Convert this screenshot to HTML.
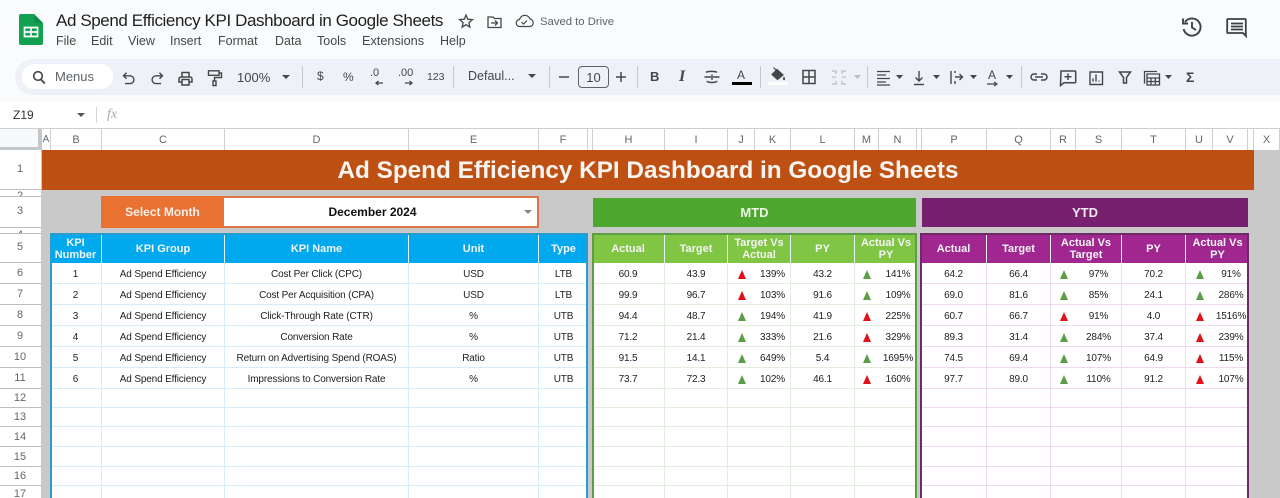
<!DOCTYPE html>
<html lang="en"><head><meta charset="utf-8"><title>Ad Spend Efficiency KPI Dashboard in Google Sheets</title>
<style>
html,body{margin:0;padding:0;width:1280px;height:498px;overflow:hidden;background:#f9fbfd}
body{position:relative;font-family:"Liberation Sans",Arial,sans-serif;color:#222;filter:blur(.3px)}
.a{position:absolute}
.t{position:absolute;white-space:nowrap;color:#444746}
.sep{position:absolute;width:1px;top:66px;height:22px;background:#c7c9cc}
.ch{position:absolute;top:129px;height:21px;line-height:22px;text-align:center;font-size:11px;color:#666;background:#fff;border-right:1px solid #cfcfcf;box-sizing:border-box}
.rh{position:absolute;left:0;width:41px;padding-right:1px;text-align:center;font-size:11px;color:#666;background:#fff;border-bottom:1px solid #bdbdbd;box-sizing:border-box;overflow:hidden}
table{position:absolute;top:233px;border-collapse:separate;border-spacing:0;table-layout:fixed;background:#fff}
td,th{padding:0;text-align:center;box-sizing:border-box;overflow:visible;white-space:nowrap}
td{font-size:10px;letter-spacing:-.15px;color:#222;font-weight:400;padding-top:2px}
th{font-size:11px;line-height:12px;color:#f4f4f4;font-weight:700;height:30px;padding-top:1px;white-space:normal;border-right:1px solid #e8f4fb}
tr.h21 td{height:21px}tr.h19 td{height:19px}tr.h20 td{height:20px}
.bl td{border-right:1px solid #d5edf7;border-bottom:1px solid #d5edf7}.bl th{background:#00a9ee}
.gr td{border-right:1px solid #e3eddd;border-bottom:1px solid #e3eddd}.gr th{background:#80c644}
.pu td{border-right:1px solid #efd9ef;border-bottom:1px solid #efd9ef}.pu th{background:#a0278f}
.gr td:nth-child(3),.gr td:nth-child(6),.pu td:nth-child(3),.pu td:nth-child(6){border-right:0}
td:last-child,th:last-child{border-right:0!important}
i{display:inline-block;width:0;height:0;border-left:4.5px solid transparent;border-right:4.5px solid transparent;vertical-align:-2px}
i.g{border-bottom:9px solid #5c9e48}i.r{border-bottom:9px solid #e30f19}
</style></head><body>

<!-- toolbar & formula bar -->
<div class="a" style="left:15px;top:59px;width:1265px;height:36px;background:#eef2f8;border-radius:18px 0 0 18px"></div>
<div class="a" style="left:22px;top:64px;width:91px;height:25px;background:#fff;border-radius:13px"></div>
<div class="a" style="left:0;top:102px;width:1280px;height:27px;background:#fff"></div>
<div class="a" style="left:0;top:128px;width:1280px;height:1px;background:#cfcfcf"></div>
<div class="a" style="left:96px;top:107px;width:1px;height:16px;background:#d5d5d5"></div>

<!-- chrome text -->
<div class="t" style="left:56px;top:11px;font-size:17px;line-height:20px;color:#1f1f1f;letter-spacing:-.4px">Ad Spend Efficiency KPI Dashboard in Google Sheets</div>
<div class="t" style="left:540px;top:15px;font-size:11.3px;line-height:14px;color:#5f6368">Saved to Drive</div>
<div class="t" style="left:56px;top:34px;font-size:12.5px;line-height:15px">File</div>
<div class="t" style="left:91px;top:34px;font-size:12.5px;line-height:15px">Edit</div>
<div class="t" style="left:128px;top:34px;font-size:12.5px;line-height:15px">View</div>
<div class="t" style="left:170px;top:34px;font-size:12.5px;line-height:15px">Insert</div>
<div class="t" style="left:218px;top:34px;font-size:12.5px;line-height:15px">Format</div>
<div class="t" style="left:275px;top:34px;font-size:12.5px;line-height:15px">Data</div>
<div class="t" style="left:317px;top:34px;font-size:12.5px;line-height:15px">Tools</div>
<div class="t" style="left:362px;top:34px;font-size:12.7px;line-height:15px">Extensions</div>
<div class="t" style="left:440px;top:34px;font-size:12.5px;line-height:15px">Help</div>
<div class="t" style="left:55px;top:69px;font-size:13px;line-height:15px;color:#5f6368">Menus</div>
<div class="t" style="left:237px;top:70px;font-size:13px;line-height:15px">100%</div>
<div class="t" style="left:317px;top:69px;font-size:12px;line-height:15px">$</div>
<div class="t" style="left:343px;top:70px;font-size:12px;line-height:15px">%</div>
<div class="t" style="left:370px;top:66px;font-size:11px;line-height:14px">.0</div>
<div class="t" style="left:398px;top:66px;font-size:11px;line-height:14px">.00</div>
<div class="t" style="left:427px;top:71px;font-size:10.5px;line-height:13px">123</div>
<div class="t" style="left:468px;top:69px;font-size:12.5px;line-height:15px">Defaul...</div>
<div class="a" style="left:578px;top:66px;width:31px;height:22px;border:1px solid #5f6368;border-radius:4px;box-sizing:border-box;text-align:center;font-size:13px;line-height:21px;color:#444746">10</div>
<div class="t" style="left:650px;top:69px;font-size:13px;line-height:15px;font-weight:700">B</div>
<div class="t" style="left:679px;top:68px;font-size:16px;line-height:17px;font-family:'Liberation Serif',serif;font-style:italic;font-weight:700">I</div>
<div class="t" style="left:737px;top:68px;font-size:12px;line-height:14px">A</div>
<div class="t" style="left:988px;top:68px;font-size:12px;line-height:14px">A</div>
<div class="t" style="left:1186px;top:69px;font-size:14px;line-height:16px;font-weight:700">Σ</div>
<div class="t" style="left:13px;top:108px;font-size:12px;line-height:14px;color:#333">Z19</div>
<div class="t" style="left:107px;top:107px;font-size:14px;line-height:16px;font-family:'Liberation Serif',serif;font-style:italic;color:#aaa">fx</div>

<div class="sep" style="left:302px"></div><div class="sep" style="left:453px"></div><div class="sep" style="left:549px"></div><div class="sep" style="left:637px"></div><div class="sep" style="left:760px"></div><div class="sep" style="left:867px"></div><div class="sep" style="left:1021px"></div>

<!-- chrome icons -->
<svg class="a" style="left:0;top:0" width="1280" height="128" viewBox="0 0 1280 128" fill="none" stroke="#444746" stroke-width="1.5">
<path d="M19 16a2 2 0 0 1 2-2h13l9 9v20a2 2 0 0 1-2 2H21a2 2 0 0 1-2-2z" fill="#12a150" stroke="none"/>
<path d="M34 14l9 9h-9z" fill="#0f8e47" stroke="none"/>
<path d="M24.500 27.500h13v9h-13zM24.500 32h13M31 27.500v9" stroke="#fff" stroke-width="1.700"/>
<path d="M466 15l1.800 4.200 4.600.4-3.500 3 1 4.500-3.900-2.400-3.900 2.400 1-4.500-3.500-3 4.600-.4z" stroke-width="1.300"/>
<path d="M488 17h5l1.500 1.500H501v9h-13zM491 23h6M495 20.500l2.500 2.500-2.500 2.500" stroke-width="1.300"/>
<path d="M520 26.500a3.500 3.500 0 0 1-.5-7 5.500 5.500 0 0 1 10.500-.5 3.800 3.800 0 0 1 0 7.500zM521.500 22l2 2 3.500-3.500" stroke-width="1.200"/>
<circle cx="38" cy="76" r="4.300" stroke-width="1.600"/><path d="M41 79.500l3.800 4" stroke-width="1.800"/>
<path d="M126.500 72.800l-3 3 3 3M123.800 75.800H130a3.900 3.900 0 0 1 0 7.800h-5" stroke-width="1.400"/>
<path d="M159.500 72.800l3 3-3 3M162.200 75.800H156a3.900 3.900 0 0 0 0 7.800h5" stroke-width="1.400"/>
<path d="M181 77h9a2 2 0 0 1 2 2v3h-3v-2.500h-7V82h-3v-3a2 2 0 0 1 2-2zM182 77v-4.500h7V77M182 79.500h7V85h-7z" stroke-width="1.500"/>
<path d="M208.500 70.800h10.500v4.500h-10.500zM219 73h2.500v4.500h-7v3.500M213 81h3v4.500h-3z" stroke-width="1.400"/>
<path d="M282 75h8l-4 4z" fill="#444746" stroke="none"/><path d="M528 74h8l-4 4z" fill="#444746" stroke="none"/>
<path d="M376 83h7M378.500 81l-2.500 2 2.500 2M405 83h7M409.500 81l2.500 2-2.500 2" stroke-width="1.300"/>
<path d="M559 77h10M616 77h10M621 72v10" stroke-width="1.500"/>
<path d="M706 72.500c1-1.500 10-1.500 11 0M704.500 77h15M707 81c1 2 9 2 10 0M712 74.500v1.500M712 78v2" stroke-width="1.400"/>
<path d="M732 83.500h20" stroke="#000" stroke-width="3"/>
<path d="M772 74.500l5-5 6 5.500-5.500 4.500zM773.500 67.500l3.500 3.500" fill="#444746" stroke-width="1.200"/><path d="M784 76.500c1.300 1.500 1.500 3.500 0 3.700-1.500-.2-1.300-2.200 0-3.700z" fill="#444746" stroke="none"/>
<path d="M768 83.500h20" stroke="#fff" stroke-width="3"/>
<path d="M803 70.500h12v13h-12zM803 77h12M809 70.500v13" stroke-width="1.500"/>
<path d="M832 71h4v3M846 71h-4v3M832 84h4v-3M846 84h-4v-3M832 77h4M842 77h4" stroke="#b9bec5" stroke-width="1.300"/>
<path d="M854 75h7l-3.500 4z" fill="#b9bec5" stroke="none"/>
<path d="M877 71.500h13M877 75h9M877 78.500h13M877 82h9M877 85h13" stroke-width="1.300"/>
<path d="M896 75h7l-3.500 4zM933 75h7l-3.500 4zM970 75h7l-3.500 4zM1006 75h7l-3.500 4zM1165 75h7l-3.500 4z" fill="#444746" stroke="none"/>
<path d="M914 84.500h10M919 71v10M915.500 77.500l3.500 3.500 3.500-3.500" stroke-width="1.400"/>
<path d="M951 71v13M955 77h7M959.500 74l3 3-3 3M955 71v2M955 81v3" stroke-width="1.400"/>
<path d="M987 84h10M994 82l3 2-3 2" stroke-width="1.200"/>
<path d="M1037 74h-3a3 3 0 0 0 0 6h3M1041 74h3a3 3 0 0 1 0 6h-3M1035 77h8" stroke-width="1.500"/>
<path d="M1061 71h14a.7.7 0 0 1 .7.7V82a.7.7 0 0 1-.7.7h-11l-3.500 2.800zM1068 73.500v6.500M1064.500 76.800h7" stroke-width="1.500"/>
<path d="M1090 72h12.500v12.500h-12.500zM1093 81.500v-3M1096 81.500v-7M1099 81.500v-1" stroke-width="1.400"/>
<path d="M1119.500 72h11l-4 5.500v5.500h-3v-5.500z" stroke-width="1.500"/>
<path d="M1147 74h12.500v11h-12.500zM1144.500 83.500V71.500h12.500M1147 78h12.500M1147 81.500h12.500M1151 78v7M1155.300 78v7" stroke-width="1.300"/>
<path d="M1185 22A8.600 8.600 0 1 1 1183.600 29M1183 18.500V23.500h5M1192 22v5.500l4 2.500" stroke="#3c4043" stroke-width="1.900"/>
<path d="M1228 19h17a.8.8 0 0 1 .8.8V34l.2 2-3-3h-15a.8.8 0 0 1-.8-.8V19.800a.8.8 0 0 1 .8-.8zM1231 23.500h12M1231 26.500h12M1231 29.500h12" stroke="#3c4043" stroke-width="1.800"/>
<path d="M77 113h8l-4 4z" fill="#555" stroke="none"/>
</svg>

<!-- sheet background -->
<div class="a" style="left:41px;top:150px;width:1239px;height:348px;background:#c9c9c9"></div>
<div class="a" style="left:0;top:129px;width:38px;height:18px;background:#f8f9fa"></div>
<div class="a" style="left:0;top:147px;width:42px;height:3px;background:#c4c7c9"></div>
<div class="a" style="left:38px;top:129px;width:4px;height:21px;background:#c4c7c9"></div>

<!-- column headers -->
<div class="ch" style="left:42px;width:9px;font-size:10px">A</div>
<div class="ch" style="left:51px;width:51px">B</div>
<div class="ch" style="left:102px;width:123px">C</div>
<div class="ch" style="left:225px;width:184px">D</div>
<div class="ch" style="left:409px;width:130px">E</div>
<div class="ch" style="left:539px;width:49px">F</div>
<div class="ch" style="left:588px;width:5px"></div>
<div class="ch" style="left:593px;width:72px">H</div>
<div class="ch" style="left:665px;width:63px">I</div>
<div class="ch" style="left:728px;width:27px">J</div>
<div class="ch" style="left:755px;width:36px">K</div>
<div class="ch" style="left:791px;width:64px">L</div>
<div class="ch" style="left:855px;width:24px">M</div>
<div class="ch" style="left:879px;width:38px">N</div>
<div class="ch" style="left:917px;width:5px"></div>
<div class="ch" style="left:922px;width:65px">P</div>
<div class="ch" style="left:987px;width:64px">Q</div>
<div class="ch" style="left:1051px;width:25px">R</div>
<div class="ch" style="left:1076px;width:46px">S</div>
<div class="ch" style="left:1122px;width:64px">T</div>
<div class="ch" style="left:1186px;width:27px">U</div>
<div class="ch" style="left:1213px;width:35px">V</div>
<div class="ch" style="left:1248px;width:6px"></div>
<div class="ch" style="left:1254px;width:26px">X</div>

<!-- row headers -->
<div class="rh" style="top:150px;height:40px;line-height:39px">1</div>
<div class="rh" style="top:190px;height:7px;line-height:13px">2</div>
<div class="rh" style="top:197px;height:31px;line-height:29px">3</div>
<div class="rh" style="top:228px;height:6px;line-height:14px">4</div>
<div class="rh" style="top:234px;height:29px;line-height:27px">5</div>
<div class="rh" style="top:263px;height:21px;line-height:21px">6</div>
<div class="rh" style="top:284px;height:21px;line-height:21px">7</div>
<div class="rh" style="top:305px;height:21px;line-height:21px">8</div>
<div class="rh" style="top:326px;height:21px;line-height:21px">9</div>
<div class="rh" style="top:347px;height:21px;line-height:21px">10</div>
<div class="rh" style="top:368px;height:21px;line-height:21px">11</div>
<div class="rh" style="top:389px;height:19px;line-height:19px">12</div>
<div class="rh" style="top:408px;height:19px;line-height:19px">13</div>
<div class="rh" style="top:427px;height:20px;line-height:20px">14</div>
<div class="rh" style="top:447px;height:20px;line-height:20px">15</div>
<div class="rh" style="top:467px;height:19px;line-height:19px">16</div>
<div class="rh" style="top:486px;height:19px;line-height:16px">17</div>

<!-- banner -->
<div class="a" style="left:42px;top:150px;width:1212px;height:40px;background:#bf5013;color:#f8f4ef;font-size:24.3px;font-weight:700;line-height:42px;text-align:center;white-space:nowrap">Ad Spend Efficiency KPI Dashboard in Google Sheets</div>

<!-- selectors -->
<div class="a" style="left:101px;top:196px;width:123px;height:32px;background:#e97132;color:#f8f0e8;font-size:12px;font-weight:700;line-height:32px;text-align:center">Select Month</div>
<div class="a" style="left:224px;top:196px;width:315px;height:32px;background:#fff;border:2px solid #d9774a;border-left:0;box-sizing:border-box;color:#111;font-size:12px;font-weight:700;line-height:29px;text-align:center;text-indent:-16px">December 2024</div>
<div class="a" style="left:524px;top:210px;width:0;height:0;border-left:4px solid transparent;border-right:4px solid transparent;border-top:4px solid #888"></div>
<div class="a" style="left:593px;top:198px;width:323px;height:29px;background:#4ea72e;color:#eef6e8;font-size:13px;font-weight:700;line-height:30px;text-align:center">MTD</div>
<div class="a" style="left:922px;top:198px;width:326px;height:29px;background:#76206f;color:#f2e8f1;font-size:13px;font-weight:700;line-height:30px;text-align:center">YTD</div>

<!-- left table -->
<table class="bl" style="left:50px;width:538px">
<colgroup><col style="width:52px"><col style="width:123px"><col style="width:184px"><col style="width:130px"><col style="width:49px"></colgroup>
<tr><th>KPI Number</th><th>KPI Group</th><th>KPI Name</th><th>Unit</th><th>Type</th></tr>
<tr class="h21"><td>1</td><td>Ad Spend Efficiency</td><td>Cost Per Click (CPC)</td><td>USD</td><td>LTB</td></tr>
<tr class="h21"><td>2</td><td>Ad Spend Efficiency</td><td>Cost Per Acquisition (CPA)</td><td>USD</td><td>LTB</td></tr>
<tr class="h21"><td>3</td><td>Ad Spend Efficiency</td><td>Click-Through Rate (CTR)</td><td>%</td><td>UTB</td></tr>
<tr class="h21"><td>4</td><td>Ad Spend Efficiency</td><td>Conversion Rate</td><td>%</td><td>UTB</td></tr>
<tr class="h21"><td>5</td><td>Ad Spend Efficiency</td><td>Return on Advertising Spend (ROAS)</td><td>Ratio</td><td>UTB</td></tr>
<tr class="h21"><td>6</td><td>Ad Spend Efficiency</td><td>Impressions to Conversion Rate</td><td>%</td><td>UTB</td></tr>
<tr class="h19"><td></td><td></td><td></td><td></td><td></td></tr>
<tr class="h19"><td></td><td></td><td></td><td></td><td></td></tr>
<tr class="h20"><td></td><td></td><td></td><td></td><td></td></tr>
<tr class="h20"><td></td><td></td><td></td><td></td><td></td></tr>
<tr class="h19"><td></td><td></td><td></td><td></td><td></td></tr>
<tr class="h20"><td></td><td></td><td></td><td></td><td></td></tr>
</table>
<div class="a" style="left:50px;top:233px;width:538px;height:280px;border:2px solid #2a9bcb;box-sizing:border-box"></div>

<!-- MTD table -->
<table class="gr" style="left:592px;width:325px">
<colgroup><col style="width:73px"><col style="width:63px"><col style="width:27px"><col style="width:36px"><col style="width:64px"><col style="width:24px"><col style="width:38px"></colgroup>
<tr><th>Actual</th><th>Target</th><th colspan="2">Target Vs Actual</th><th>PY</th><th colspan="2">Actual Vs PY</th></tr>
<tr class="h21"><td>60.9</td><td>43.9</td><td><i class="r"></i></td><td>139%</td><td>43.2</td><td><i class="g"></i></td><td>141%</td></tr>
<tr class="h21"><td>99.9</td><td>96.7</td><td><i class="r"></i></td><td>103%</td><td>91.6</td><td><i class="g"></i></td><td>109%</td></tr>
<tr class="h21"><td>94.4</td><td>48.7</td><td><i class="g"></i></td><td>194%</td><td>41.9</td><td><i class="r"></i></td><td>225%</td></tr>
<tr class="h21"><td>71.2</td><td>21.4</td><td><i class="g"></i></td><td>333%</td><td>21.6</td><td><i class="r"></i></td><td>329%</td></tr>
<tr class="h21"><td>91.5</td><td>14.1</td><td><i class="g"></i></td><td>649%</td><td>5.4</td><td><i class="g"></i></td><td>1695%</td></tr>
<tr class="h21"><td>73.7</td><td>72.3</td><td><i class="g"></i></td><td>102%</td><td>46.1</td><td><i class="r"></i></td><td>160%</td></tr>
<tr class="h19"><td></td><td></td><td></td><td></td><td></td><td></td><td></td></tr>
<tr class="h19"><td></td><td></td><td></td><td></td><td></td><td></td><td></td></tr>
<tr class="h20"><td></td><td></td><td></td><td></td><td></td><td></td><td></td></tr>
<tr class="h20"><td></td><td></td><td></td><td></td><td></td><td></td><td></td></tr>
<tr class="h19"><td></td><td></td><td></td><td></td><td></td><td></td><td></td></tr>
<tr class="h20"><td></td><td></td><td></td><td></td><td></td><td></td><td></td></tr>
</table>
<div class="a" style="left:592px;top:233px;width:325px;height:280px;border:2px solid #5c9e48;box-sizing:border-box"></div>

<!-- YTD table -->
<table class="pu" style="left:921px;width:328px">
<colgroup><col style="width:66px"><col style="width:64px"><col style="width:25px"><col style="width:46px"><col style="width:64px"><col style="width:27px"><col style="width:36px"></colgroup>
<tr><th>Actual</th><th>Target</th><th colspan="2">Actual Vs Target</th><th>PY</th><th colspan="2">Actual Vs PY</th></tr>
<tr class="h21"><td>64.2</td><td>66.4</td><td><i class="g"></i></td><td>97%</td><td>70.2</td><td><i class="g"></i></td><td>91%</td></tr>
<tr class="h21"><td>69.0</td><td>81.6</td><td><i class="g"></i></td><td>85%</td><td>24.1</td><td><i class="g"></i></td><td>286%</td></tr>
<tr class="h21"><td>60.7</td><td>66.7</td><td><i class="r"></i></td><td>91%</td><td>4.0</td><td><i class="r"></i></td><td>1516%</td></tr>
<tr class="h21"><td>89.3</td><td>31.4</td><td><i class="g"></i></td><td>284%</td><td>37.4</td><td><i class="r"></i></td><td>239%</td></tr>
<tr class="h21"><td>74.5</td><td>69.4</td><td><i class="g"></i></td><td>107%</td><td>64.9</td><td><i class="r"></i></td><td>115%</td></tr>
<tr class="h21"><td>97.7</td><td>89.0</td><td><i class="g"></i></td><td>110%</td><td>91.2</td><td><i class="r"></i></td><td>107%</td></tr>
<tr class="h19"><td></td><td></td><td></td><td></td><td></td><td></td><td></td></tr>
<tr class="h19"><td></td><td></td><td></td><td></td><td></td><td></td><td></td></tr>
<tr class="h20"><td></td><td></td><td></td><td></td><td></td><td></td><td></td></tr>
<tr class="h20"><td></td><td></td><td></td><td></td><td></td><td></td><td></td></tr>
<tr class="h19"><td></td><td></td><td></td><td></td><td></td><td></td><td></td></tr>
<tr class="h20"><td></td><td></td><td></td><td></td><td></td><td></td><td></td></tr>
</table>
<div class="a" style="left:920px;top:233px;width:329px;height:280px;border:2px solid #6e2a68;box-sizing:border-box"></div>
</body></html>
